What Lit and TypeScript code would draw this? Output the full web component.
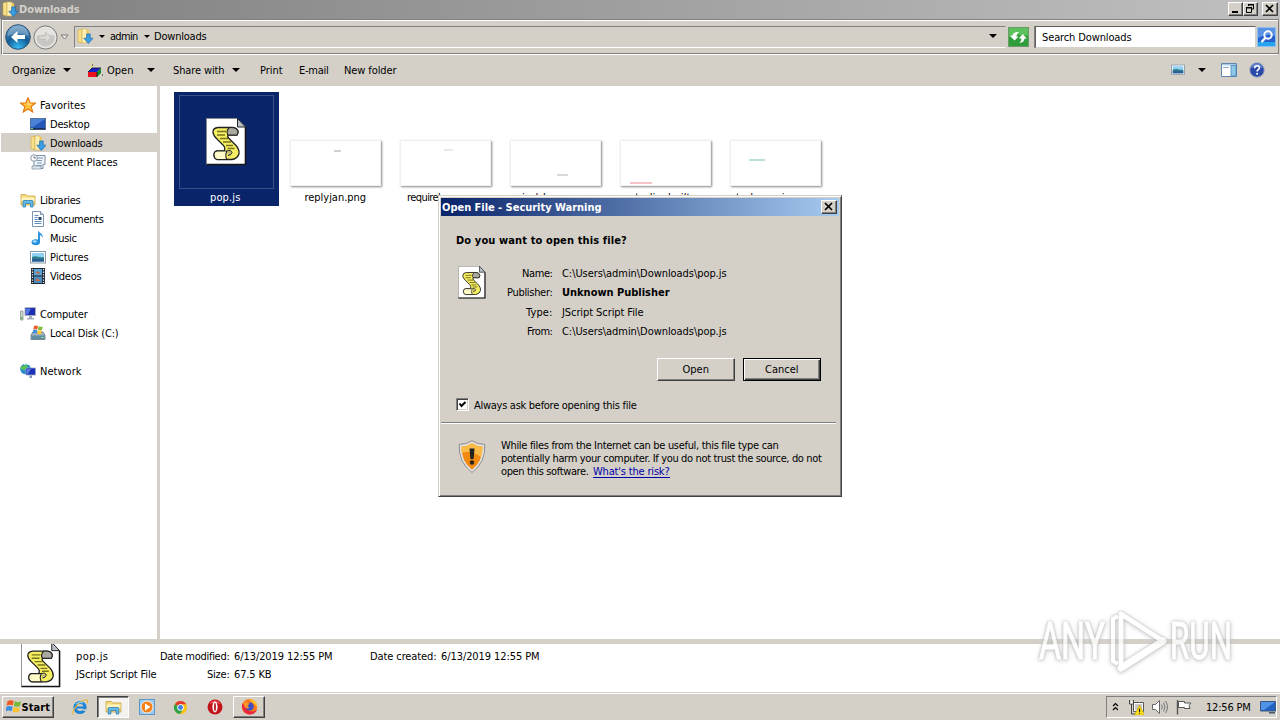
import { LitElement, html, css, svg } from 'lit';
import { customElement, property } from 'lit/decorators.js';
import { classMap } from 'lit/directives/class-map.js';

const icon = (w: number, h: number, body: unknown, box = '0 0 16 16') => html`
  <svg class="icon" width=${w} height=${h} viewBox=${box} preserveAspectRatio="none">${body}</svg>
`;

const downloads = svg`
  <path d="M1 2l4-1v14l-4-1z" fill="#f7e08a" stroke="#c9a545" stroke-width=".6"/>
  <path d="M5 1h5v14H5z" fill="#fbeeb0" stroke="#cfae52" stroke-width=".6"/>
  <path d="M10 2h2v10h-2z" fill="#e9c860"/>
  <path d="M9.600 6h3.600v4.200H16l-4.600 5.400L6.800 10.200h2.800z" fill="#3a9fe4" stroke="#1d68ad" stroke-width=".7"/>`;

const star = svg`<path d="M8 .6l2 5.200 5.500.3-4.300 3.400 1.500 5.500L8 12l-4.700 3 1.500-5.500L.5 6.100 6 5.800z" fill="#ffc23c" stroke="#e2780f" stroke-width="1.100"/>
  <path d="M8 3.500l1.200 3.200 3 .3-4.200 1z" fill="#fff0a8"/>`;

const desktop = svg`<rect x=".5" y="2.500" width="15" height="11" fill="#2458b8" stroke="#56719c"/>
  <path d="M1 3h14L3 11H1z" fill="#4a82d6"/><path d="M1 12h14v1.500H1z" fill="#1c2f55"/><path d="M1 12h2v1H1z" fill="#6fce5c"/>`;

const recent = svg`<path d="M6 1.500h9v9h-2v4H4v-9" fill="#eef3f8" stroke="#7b8ea3"/>
  <path d="M7 4h6M7 6.500h5M7 9h5M6 11.500h6" stroke="#7f98b4"/><path d="M2 12h9v3H2z" fill="#dfe6ee" stroke="#7b8ea3" stroke-width=".7"/>
  <circle cx="4" cy="4" r="3.300" fill="#fff" stroke="#8796a8"/><path d="M4 2v2h2" fill="none" stroke="#4b5a6d" stroke-width=".8"/>`;

const library = svg`<path d="M1 2.500h5l1.500 1.500H15v9H1z" fill="#f7dc7c" stroke="#c5a343" stroke-width=".8"/>
  <path d="M1.500 5.500h13V9h-13z" fill="#fdf3bd"/>
  <path d="M3 15V9.500q0-1 1-1h8q1 0 1 1V15h-2.500v-3.500h-5V15z" fill="#62b9ea" stroke="#2f7fb5" stroke-width=".8"/>`;

const documents = svg`<path d="M2.500.5h8l3 3v12h-11z" fill="#fff" stroke="#7a93ae"/><path d="M10.500.5v3h3" fill="#d5e3f1" stroke="#7a93ae"/>
  <path d="M4.500 4.500h4M4.500 6.500h3M4.500 8.500h3M4.500 10.500h7M4.500 12.500h7" stroke="#5f8fc2"/><path d="M8.500 6h3v3h-3z" fill="#26476e"/>`;

const music = svg`<path d="M8 0c.3 3 5.500 3 5 8.500-.4-2-1.600-3-3-3.200V12H8z" fill="#2f94dd"/>
  <ellipse cx="5.800" cy="12.300" rx="4.200" ry="3" fill="#2590dc"/><ellipse cx="4.800" cy="11.400" rx="2" ry="1.200" fill="#a4dbfa"/>`;

const picture = svg`<rect x=".5" y="2.500" width="15" height="11.500" fill="#fff" stroke="#8b9aa8"/>
  <path d="M2 4h12v8.500H2z" fill="#8fd0f4"/><path d="M2 8c4-2 7 1 12 0v4.500H2z" fill="#2f7f8c"/><path d="M2 10c4-1 8 1 12 0v2.500H2z" fill="#2b5d97"/>`;

const video = svg`<path d="M1 0h14v16H1z" fill="#1d2633"/><path d="M4 1h8v6.500H4z" fill="#5aa5d8"/><path d="M4 8.500h8V15H4z" fill="#4a8ec4"/>
  <path d="M5 5l3-2 3 3zM5 13l2-3 4 3z" fill="#c36a4a"/>
  <path d="M2.500 1v14M13.500 1v14" stroke="#dfe7ef" stroke-width="1.300" stroke-dasharray="1.300 1.300"/>`;

const computer = svg`<path d="M5 1.500h10.500v8H5z" fill="#1d2fb4" stroke="#a9b3c4"/><path d="M6 2.500h5l-3 6H6z" fill="#5375e2"/>
  <path d="M9 10h3v2h2v1.500H7V12h2z" fill="#a5adbd"/><path d="M.5 5h2.500v9H.5z" fill="#cfd9d0" stroke="#808d86" stroke-width=".7"/><path d="M1 11h1.500v2H1z" fill="#58b84a"/>`;

const disk = svg`<path d="M1 10l2-3h10l2 3v4.500H1z" fill="#9fb2bf" stroke="#5f7380" stroke-width=".8"/><path d="M1.500 10.500h13v3.500h-13z" fill="#5f8ea2"/><path d="M11 12h2.500v1H11z" fill="#86f07c"/>
  <path d="M4 1q2-1 4 0L7.300 4.500q-2-1-4 0z" fill="#ee5b27"/><path d="M8.600 1.200q2 1 4 .2L12 5q-2 .6-4-.3z" fill="#7dbb3b"/>
  <path d="M3.200 5q2-1 4 0l-.8 3.400q-2-1-4 0z" fill="#3f8fe0"/><path d="M7.800 5.300q2 1 4 .2l-.8 3.400q-2 .6-4-.3z" fill="#fbc52d"/>`;

const network = svg`<circle cx="5.500" cy="6" r="5.300" fill="#2b8ccb"/><path d="M2 2.500c2 1 3-1 5 0s-1 3-2 4-3 0-4.500-1z" fill="#5bc24a"/><path d="M4 1.500q2-1 4 0" stroke="#d8f3ff" fill="none"/>
  <path d="M6 5h9.500v7H6z" fill="#1c30b8" stroke="#98a9c8" stroke-width=".8"/><path d="M7 6h4l-3 5H7z" fill="#5478e0"/><path d="M9.500 12.500h2.500V15H9.500z" fill="#7e91b5"/>`;

const screen = svg`<path d="M.5 2.500h15v9.500H.5z" fill="#2462c2" stroke="#3c567f"/><path d="M1 3h14L4 11H1z" fill="#4f92e6"/><path d="M9 13h6v1.500H9z" fill="#4d5866"/>`;

const openApp = svg`<path d="M1 10l4-4h9l-4 4z" fill="#1420c8"/><path d="M1 10h9v5H1z" fill="#e8121c"/><path d="M10 10l4-4v5l-4 4z" fill="#158a2a"/>
  <path d="M1 10l4-4h9M10 10v5" stroke="#111" fill="none" stroke-width=".8"/><path d="M3 0h1M5 2h1M2 3h1M4 4h2" stroke="#f2dc3c" stroke-width="1.200"/><path d="M5 3h1M15 13h1" stroke="#111"/>`;

const preview = svg`<path d="M.5 1.500h15v13H.5z" fill="#fff" stroke="#5f86ad"/><path d="M1 2h14v1.500H1z" fill="#a9cbe6"/><path d="M10 3.500h5V14h-5z" fill="#8ec9ea" stroke="#4d86b5" stroke-width=".8"/><path d="M2 5.500h6" stroke="#8ca7bf"/>`;

const winFlag = svg`<path d="M1.500 2.500q3-2.200 6.200-.5L6.800 7q-3-1.600-6.200.2z" fill="#ee5a24"/><path d="M8.700 2.500q3 1.600 6.500-.2L14 7.400q-3 1.600-6.200 0z" fill="#79b93a"/>
  <path d="M.5 8.300q3-1.700 6.100-.1L5.700 13q-3-1.600-6.100.3z" fill="#3b8ee2"/><path d="M7.600 8.600q3 1.700 6.200.1l-1.100 4.900q-3 1.600-6-.1z" fill="#fcc32c"/>`;

const ie = svg`<circle cx="8" cy="8.500" r="5" fill="none" stroke="#1f84d6" stroke-width="3.200"/><path d="M4 8.500h9.500" stroke="#1f84d6" stroke-width="2.200"/><path d="M10 10.200h6v1.600h-5z" fill="#d4d0c8"/>
  <path d="M1.500 15.500C-2 13 9 0 14.500.8c1.500.3 1.200 2 .5 3.400" fill="none" stroke="#e9b835" stroke-width="1.200"/><path d="M4 5q3-3 7-1" stroke="#93d6fb" fill="none"/>`;

const wmp = svg`<rect x=".5" y=".5" width="15" height="15" fill="#9dcbee" stroke="#5d97c8"/><circle cx="8" cy="8" r="6" fill="#f5821c" stroke="#fff" stroke-width=".8"/><path d="M6 4.500l5.500 3.500L6 11.500z" fill="#fff"/>`;

const chrome = svg`<circle cx="8" cy="8" r="7" fill="#fbc116"/><path d="M8 8L1.900 4.500A7 7 0 0 1 14.100 4.500H8z" fill="#e33b2e"/><path d="M8 8L1.900 4.500A7 7 0 0 0 7.500 15L11 9.700z" fill="#2da14c"/>
  <circle cx="8" cy="8" r="3.500" fill="#fff"/><circle cx="8" cy="8" r="2.600" fill="#3f7fe8"/>`;

const opera = svg`<circle cx="8" cy="8" r="7.500" fill="#c3141c"/><path d="M2 5q6-7 12 0-6-2-12 0z" fill="#ea5a5c"/><ellipse cx="8" cy="8" rx="2.600" ry="5.400" fill="#fff"/><ellipse cx="8" cy="8" rx=".9" ry="4.200" fill="#b30f17"/>`;

const firefox = svg`<circle cx="8" cy="8.300" r="7.300" fill="#ff7a1a"/><path d="M8 1c5 0 8 4 7.200 8.500C14.500 6 12 6 11 4.500 10.200 3 8.500 3 8 1z" fill="#ffc42e"/>
  <path d="M1 5c-.5 6 2 10 7 10.500 3 .2 6-1.500 7-5-3 3-7 3-9 0z" fill="#e8263f"/><circle cx="8.200" cy="8" r="3.700" fill="#3a4fc4"/><path d="M3 4c2-.6 4 0 5 1.500L6 7.500l2 2c-3 1.500-5-1-5-3z" fill="#ff9425"/>`;

const search = svg`<rect x=".5" y=".5" width="18" height="19" fill="#2560cc" stroke="#8dbdf0"/><path d="M1 1h17v8q-8-3-17 2z" fill="#5b93e4"/><path d="M1 15h17v4H1z" fill="#28a4ec"/>
  <circle cx="11" cy="8" r="3.700" fill="none" stroke="#fff" stroke-width="2"/><path d="M8.200 11L4.500 15" stroke="#fff" stroke-width="2.400"/>`;

const refresh = svg`<rect x=".5" y=".5" width="19" height="19" fill="#2f9d3a" stroke="#6c9a6a"/><path d="M1 1h18v8q-9-3-18 1z" fill="#5cc25e"/>
  <path d="M2 9l4.200 4.500L10 9.500H8q.2-3 2.400-4.500Q5 4.500 4.300 8.600z" fill="#fff"/>
  <path d="M10.300 11.500L14 7l4 4.500h-2.200q-.4 4-5 4.500 2-1.500 2-4.500z" fill="#fff"/>`;

const help = svg`<circle cx="8" cy="8" r="7.300" fill="#2b4aa8" stroke="#a3aec6"/><path d="M2 6a6.300 6.300 0 0 1 12 0q-6-2-12 0z" fill="#6385cf"/>
  <path d="M5.700 6.200q0-2.400 2.400-2.400t2.300 2q0 1.200-1.300 1.900-1 .5-1 1.800" fill="none" stroke="#fff" stroke-width="1.600"/><circle cx="8.100" cy="11.800" r="1" fill="#fff"/>`;

const back = svg`<defs><radialGradient id="b" cx=".5" cy=".95" r=".95"><stop offset="0" stop-color="#35c0f5"/><stop offset=".5" stop-color="#155c96"/><stop offset="1" stop-color="#6b9cc2"/></radialGradient></defs>
  <circle cx="13" cy="13" r="12.300" fill="url(#b)" stroke="#2c5478"/><path d="M2.500 12a10.500 10.500 0 0 1 21 0q-10-4-21 0z" fill="#fff" opacity=".25"/>
  <path d="M12.500 7L6 13l6.500 6v-4H20v-4h-7.500z" fill="#fff"/>`;

const forward = svg`<circle cx="12.500" cy="12.500" r="11.600" fill="#c9c7c4" stroke="#7f7f7f"/><circle cx="12.500" cy="12.500" r="10" fill="none" stroke="#e8e6e3" stroke-width="1.500"/>
  <path d="M3 11a9.600 9.600 0 0 1 19 0q-9-3-19 0z" fill="#e4e2df"/><path d="M12.500 7l5.500 5.500-5.500 5.500v-4H6v-3h6.500z" fill="#dcdad7" stroke="#bfbcb8" stroke-width=".8"/>`;

const netTray = svg`<path d="M5.500 3.500h10v9h-10z" fill="#fff" stroke="#555"/><path d="M7 5h7v6H7z" fill="#c9c9c9"/><path d="M1.500 1v4h4V1M3.500 5v10H9" stroke="#444" fill="none"/><path d="M2.500 2.500h2v2h-2z" fill="#fff"/>
  <path d="M11.500 6l5 10H6.500z" fill="#ffe11a" stroke="#b89500" stroke-width=".6"/><path d="M11.500 9.500v3.500M11.500 13.800v1" stroke="#222" stroke-width="1.200"/>`;

const speaker = svg`<path d="M.5 5.500h3l4-4v13l-4-4h-3z" fill="#fff" stroke="#666"/><path d="M9.500 5.500q1.800 2.500 0 5M11.500 3.500q3 4.500 0 9M13.500 2q4 6 0 12" fill="none" stroke="#777"/>`;

const flag = svg`<path d="M1.500 1v14.500" stroke="#555" stroke-width="1.400"/><path d="M2.500 2.500h6v1.500h6.500l-2 2.500 1 3H8.500V8.500h-6z" fill="#fff" stroke="#555"/>`;

const scroll = svg`
  <path d="M.5.500h31L39.500 9v37.500H.5z" fill="#fff" stroke="#8b8b8b"/>
  <path d="M39.500 9v37.500H.5" fill="none" stroke="#151515" stroke-width="1.600"/>
  <path d="M31.500.5V9h8z" fill="#b9c0cc" stroke="#222"/>
  <path d="M12 9.500Q7 10 7 14q0 3 3.500 6.500L17 27q3 3 1 6h-7q-3 .5-3 4t3 4.500h15q6-1 7-6 .5-4-3-8l-7-7q-2-2-1-3.500h9q2.500-4-1-6.500-1.500-1-4-1z" fill="#f6ee62" stroke="#222" stroke-width="1.300"/>
  <path d="M23.500 9.500q-4 3.500-1.500 7.500h9q2.500-4-1-6.500-2-1.200-6.500-1z" fill="#a9a9a0" stroke="#222" stroke-width="1.100"/>
  <path d="M11 33q-3 .5-3 4t3 4.500h10q-2.500-4 0-8.500z" fill="#fffbc8" stroke="#222" stroke-width="1.100"/>
  <path d="M21 33q4-1.500 5 1.500-1 3-4 3" fill="#c9c178" stroke="#222"/>
  <path d="M11 13.500h9M11 17h8M14 20.500h8M17 24h8M20 27.500h7M21.500 30.500h7" stroke="#77721d" stroke-width="1.400"/>`;

const shield = svg`<path d="M14 .7q6 4 12.700 3.600Q28 22 14 32.500 0 22 1.300 4.300 8 4.700 14 .7z" fill="#e4e4e4" stroke="#777" stroke-width=".8"/>
  <path d="M14 3.200q5 3 10.500 3.200Q25 21 14 29.800 3 21 3.500 6.400 9 6.200 14 3.200z" fill="#f28a12"/>
  <path d="M14 3.200q5 3 10.500 3.200.2 6-1.500 10.500Q13 10 3.600 13q-.3-3-.1-6.600Q9 6.200 14 3.200z" fill="#fbbb48"/>
  <path d="M11.500 8.500h5L15.600 19h-3.200z" fill="#222"/><circle cx="14" cy="22.500" r="2.200" fill="#222"/>`;

// Text whose tracking is adjusted so that it fills a given width.
@customElement('fit-text')
export class FitText extends LitElement {
  static styles = css`
    :host { display: inline-block; white-space: pre; line-height: 16px; height: 14px; flex: none; }
    span { display: inline-block; }
  `;

  @property({ type: Number }) w = 0;
  @property() text = '';

  async firstUpdated() {
    await document.fonts.ready;
    const span = this.renderRoot.querySelector('span')!;
    const natural = span.getBoundingClientRect().width;
    span.style.letterSpacing = `${(this.w - 0.5 - natural) / this.text.length}px`;
  }

  render() {
    return html`<span>${this.text}</span>`;
  }
}

const t = (text: string, w: number) => html`<fit-text .text=${text} .w=${w} style="width:${w}px"></fit-text>`;

const tree = [
  [
    { name: 'Favorites', w: 46, icon: star },
    { name: 'Desktop', w: 40, icon: desktop },
    { name: 'Downloads', w: 53, icon: downloads, active: true },
    { name: 'Recent Places', w: 68, icon: recent },
  ],
  [
    { name: 'Libraries', w: 41, icon: library },
    { name: 'Documents', w: 54, icon: documents },
    { name: 'Music', w: 27, icon: music },
    { name: 'Pictures', w: 39, icon: picture },
    { name: 'Videos', w: 32, icon: video },
  ],
  [
    { name: 'Computer', w: 48, icon: computer },
    { name: 'Local Disk (C:)', w: 69, icon: disk },
  ],
  [{ name: 'Network', w: 42, icon: network }],
];

const images = [
  { name: 'replyjan.png', w: 62, mark: [43, 9, 7, '#c4c4c4'] },
  { name: 'requirehome.png', w: 77, mark: [43, 8, 9, '#e4e4e4'] },
  { name: 'singlebanner.png', w: 76, mark: [46, 33, 11, '#d0d0d0'] },
  { name: 'australianbuilt.png', w: 96, mark: [9, 41, 22, '#f4b4bc'] },
  { name: 'studyservice.png', w: 90, mark: [18, 18, 16, '#acd8cc'] },
];

@customElement('app-root')
export class AppRoot extends LitElement {
  static styles = css`
    :host {
      display: flex;
      flex-direction: column;
      position: relative;
      width: 1280px;
      height: 720px;
      overflow: hidden;
      background: #d4d0c8;
      color: #000;
      font: 11px Tahoma, 'DejaVu Sans Condensed', 'DejaVu Sans', sans-serif;
      cursor: default;
    }
    * { box-sizing: border-box; }
    .icon { display: block; flex: none; }
    .bold { font-weight: bold; }
    .grow { flex: 1; }

    .title {
      display: flex;
      align-items: center;
      height: 19px;
      padding: 0 2px 1px 2px;
      background: linear-gradient(90deg, #808080, #c0c0c0);
      color: #d4d0c8;
      flex: none;
    }
    .title fit-text { margin-left: 1px; font-weight: bold; }
    .winbtn {
      width: 15px;
      height: 14px;
      background: #d4d0c8;
      border: 1px solid;
      border-color: #fff #404040 #404040 #fff;
      box-shadow: inset -1px -1px #808080;
    }
    .winbtn.close { margin-left: 4px; width: 16px; }

    .nav {
      display: flex;
      align-items: center;
      height: 36px;
      margin: 0 1px;
      border: 1px solid #808080;
      border-bottom: 1px solid #fff;
      box-shadow: inset 1px 1px #fff, inset 0 -1px #808080;
      padding-left: 3px;
      flex: none;
    }
    .tri { width: 0; border: 4px solid transparent; border-top-color: #000; border-bottom: 0; flex: none; }
    .tri.small { border-width: 3px 3px 0; }
    .address {
      display: flex;
      align-items: center;
      width: 932px;
      height: 22px;
      margin-left: 5px;
      padding: 0 0 2px 2px;
      border: 1px solid;
      border-color: #808080 #d4d0c8 #fff #808080;
      background: #d4d0c8;
      flex: none;
    }
    .search {
      width: 221px;
      height: 22px;
      margin: 0 1px 0 6px;
      padding: 3px 0 0 6px;
      background: #fff;
      border: 1px solid;
      border-color: #606060 #d4d0c8 #d4d0c8 #606060;
      box-shadow: -1px 0 #808080;
      flex: none;
    }

    .toolbar { display: flex; align-items: center; height: 31px; padding: 0 0 2px 12px; flex: none; }

    .main { display: flex; height: 553px; background: #fff; flex: none; }
    .tree { width: 157px; padding-top: 9px; }
    .group { margin-bottom: 19px; }
    .node { display: flex; align-items: center; height: 19px; padding-left: 29px; gap: 4px; margin-left: 1px; }
    .node.top { padding-left: 19px; }
    .node.active { background: #d4d0c8; }
    .split { width: 3px; background: #d4d0c8; }

    .files { display: flex; align-items: flex-start; gap: 5px; padding: 6px 0 0 14px; }
    .file { display: flex; flex-direction: column; align-items: center; width: 105px; height: 114px; }
    .file fit-text { margin-right: 2px; }
    .file.selected { background: #0a246a; color: #fff; }
    .frame {
      display: flex;
      align-items: center;
      justify-content: center;
      width: 95px;
      height: 94px;
      margin: 3px 0 1px;
    }
    .selected .frame { border: 1px solid #3a5088; }
    .frame.thumb { align-items: flex-end; padding: 0 3px 3px 0; }
    .paper { width: 91px; height: 46px; background: #fff; border: 1px solid #f0f0f0; box-shadow: 1px 1px 2px #888; }
    .mark { height: 2px; opacity: 0.8; }

    .details { height: 53px; background: #fff; border-top: 5px solid #d4d0c8; display: flex; flex: none; }
    .doc { margin-left: 21px; height: 44px; overflow: hidden; display: flex; align-items: flex-end; }
    .col { display: grid; grid-auto-rows: 18px; padding-top: 5px; column-gap: 4px; justify-items: start; align-content: start; }
    .pair { grid-template-columns: auto auto; }
    .pair > :nth-child(odd) { justify-self: end; }

    .taskbar {
      display: flex;
      align-items: center;
      height: 28px;
      border-top: 1px solid #d4d0c8;
      box-shadow: inset 0 1px #fff;
      padding: 3px 3px 2px 2px;
      flex: none;
    }
    .btn {
      display: flex;
      align-items: center;
      justify-content: center;
      background: #d4d0c8;
      border: 1px solid;
      border-color: #fff #404040 #404040 #fff;
      box-shadow: inset -1px -1px #808080;
      padding-bottom: 1px;
    }
    .start { width: 52px; height: 22px; font-weight: bold; }
    .task { width: 32px; height: 22px; }
    .task.pressed { background: #f4f2ee; border-color: #404040 #fff #fff #404040; box-shadow: inset 1px 1px #808080; }
    .quick { margin: 0 9px 0 18px; display: flex; }
    .tray {
      display: flex;
      align-items: center;
      width: 171px;
      height: 22px;
      border: 1px solid;
      border-color: #808080 #fff #fff #808080;
      padding: 0 0 1px 5px;
    }

    .dialog {
      position: absolute;
      left: 438px;
      top: 195px;
      width: 404px;
      height: 302px;
      padding: 1px;
      background: #d4d0c8;
      border: 1px solid;
      border-color: #d4d0c8 #404040 #404040 #d4d0c8;
      box-shadow: inset 1px 1px #fff, inset -1px -1px #808080;
    }
    .caption {
      display: flex;
      align-items: center;
      justify-content: space-between;
      height: 18px;
      margin: 1px 1px 0;
      padding: 0 2px 0 1px;
      background: linear-gradient(90deg, #0a246a, #a6caf0);
      color: #fff;
      font-weight: bold;
    }
    .caption .winbtn { width: 16px; height: 14px; }
    .body { padding: 17px 19px 0 16px; }
    .info { display: flex; margin-top: 17px; height: 94px; }
    .info > svg { margin: 2px 0 0 2px; }
    .fields {
      display: grid;
      grid-template-columns: 67px auto;
      grid-template-rows: 19px 20px 19px 19px;
      column-gap: 9px;
      margin-top: 2px;
      align-content: start;
    }
    .fields > :nth-child(odd) { justify-self: end; }
    .actions { display: flex; justify-content: flex-end; gap: 8px; }
    .actions .btn { width: 78px; height: 23px; padding-bottom: 2px; }
    .actions .default { border: 1px solid #000; box-shadow: inset 1px 1px #fff, inset -1px -1px #404040, inset -2px -2px #808080; }
    .check { display: flex; align-items: flex-start; margin-top: 17px; gap: 5px; height: 14px; }
    .box {
      width: 13px;
      height: 13px;
      background: #fff;
      border: 1px solid;
      border-color: #808080 #fff #fff #808080;
      box-shadow: inset 1px 1px #404040, inset -1px -1px #d4d0c8;
    }
    .rule { height: 2px; margin: 10px 4px 0 1px; border-top: 1px solid #808080; border-bottom: 1px solid #fff; }
    .warn { display: flex; padding: 14px 0 0 18px; gap: 15px; }
    .warn svg { margin-top: 2px; }
    .lines { display: grid; grid-auto-rows: 13px; }
    .link { color: #0000a8; border-bottom: 1px solid #0000a8; height: 14px; margin-left: 4px; display: inline-flex; }
    .last { display: flex; }

    .watermark { position: absolute; left: 1030px; top: 602px; overflow: visible; }
    .watermark text { font-family: Roboto, sans-serif; font-size: 52px; }
    .glow { filter: drop-shadow(0 0 1.5px #aaa) drop-shadow(0 1px 2px #ccc); }
  `;

  private renderNode(node: any, i: number) {
    return html`
      <div class=${classMap({ node: true, top: i === 0, active: !!node.active })}>
        ${icon(16, 16, node.icon)}${t(node.name, node.w)}
      </div>
    `;
  }

  private renderImage(item: any) {
    const [x, y, w, color] = item.mark;
    return html`
      <div class="file">
        <div class="frame thumb">
          <div class="paper">
            <div class="mark" style="width:${w}px;margin:${y}px 0 0 ${x}px;background:${color}"></div>
          </div>
        </div>
        ${t(item.name, item.w)}
      </div>
    `;
  }

  private gap(w: number) {
    return html`<div style="width:${w}px;flex:none"></div>`;
  }

  private cross() {
    return icon(14, 12, svg`<path d="M3 2l7 7M10 2l-7 7" stroke="#000" stroke-width="1.700"/>`, '0 0 14 12');
  }

  private renderTitle() {
    return html`
      <div class="title">
        ${icon(16, 16, downloads)}${t('Downloads', 61)}
        <div class="grow"></div>
        <div class="winbtn">${icon(13, 12, svg`<path d="M3 8h6v2H3z"/>`, '0 0 13 12')}</div>
        <div class="winbtn">
          ${icon(13, 12, svg`<path d="M4.500 3V1.500h5V6H8" fill="none" stroke="#000"/><path d="M4 1h6v1.500H4zM2 4h6v1.500H2z"/><path d="M2.500 4.500h5v5h-5z" fill="none" stroke="#000"/>`, '0 0 13 12')}
        </div>
        <div class="winbtn close">${this.cross()}</div>
      </div>
    `;
  }

  private renderNav() {
    return html`
      <div class="nav">
        ${icon(26, 26, back, '0 0 26 26')}${this.gap(2)}${icon(25, 25, forward, '0 0 25 25')}${this.gap(2)}
        ${icon(9, 6, svg`<path d="M1 1h7L4.500 5z" fill="#f4f2ee" stroke="#777"/>`, '0 0 9 6')}
        <div class="address">
          ${icon(16, 16, downloads)}${this.gap(6)}
          <div class="tri small"></div>${this.gap(5)}${t('admin', 28)}${this.gap(6)}
          <div class="tri small"></div>${this.gap(4)}${t('Downloads', 53)}
          <div class="grow"></div><div class="tri"></div>${this.gap(8)}
        </div>
        ${this.gap(2)}${icon(21, 20, refresh, '0 0 20 20')}
        <div class="search">${t('Search Downloads', 90)}</div>
        ${icon(19, 20, search, '0 0 19 20')}
      </div>
    `;
  }

  private renderToolbar() {
    return html`
      <div class="toolbar">
        ${t('Organize', 44)}${this.gap(7)}<div class="tri"></div>${this.gap(16)}
        ${icon(16, 16, openApp)}${this.gap(4)}${t('Open', 27)}${this.gap(13)}<div class="tri"></div>${this.gap(18)}
        ${t('Share with', 52)}${this.gap(7)}<div class="tri"></div>${this.gap(20)}
        ${t('Print', 23)}${this.gap(16)}${t('E-mail', 30)}${this.gap(15)}${t('New folder', 53)}
        <div class="grow"></div>
        ${icon(14, 13, picture)}${this.gap(13)}<div class="tri"></div>${this.gap(15)}
        ${icon(16, 16, preview)}${this.gap(12)}${icon(16, 16, help)}${this.gap(15)}
      </div>
    `;
  }

  private renderDialog() {
    return html`
      <div class="dialog">
        <div class="caption">${t('Open File - Security Warning', 160)}<div class="winbtn">${this.cross()}</div></div>
        <div class="body">
          <div class="bold">${t('Do you want to open this file?', 171)}</div>
          <div class="info">
            ${icon(28, 33, scroll, '0 0 41 48')}
            <div class="fields">
              ${t('Name:', 31)}${t('C:\\Users\\admin\\Downloads\\pop.js', 165)}
              ${t('Publisher:', 46)}<span class="bold">${t('Unknown Publisher', 108)}</span>
              ${t('Type:', 27)}${t('JScript Script File', 82)}
              ${t('From:', 26)}${t('C:\\Users\\admin\\Downloads\\pop.js', 165)}
            </div>
          </div>
          <div class="actions">
            <div class="btn">${t('Open', 27)}</div>
            <div class="btn default">${t('Cancel', 34)}</div>
          </div>
          <div class="check">
            <div class="box">${icon(11, 11, svg`<path d="M2.500 4.500L4.500 7 8.500 3" fill="none" stroke="#000" stroke-width="2"/>`, '0 0 11 11')}</div>
            ${t('Always ask before opening this file', 163)}
          </div>
        </div>
        <div class="rule"></div>
        <div class="warn">
          ${icon(28, 33, shield, '0 0 28 33')}
          <div class="lines">
            ${t('While files from the Internet can be useful, this file type can', 278)}
            ${t('potentially harm your computer. If you do not trust the source, do not', 321)}
            <div class="last">${t('open this software.', 88)}<span class="link">${t("What's the risk?", 77)}</span></div>
          </div>
        </div>
      </div>
    `;
  }

  private renderTaskbar() {
    return html`
      <div class="taskbar">
        <div class="btn start">${icon(16, 15, winFlag)}${t('Start', 29)}</div>
        <div class="quick">${icon(16, 16, ie)}</div>
        <div class="btn task pressed">${icon(17, 16, library)}</div>
        ${this.gap(10)}${icon(16, 16, wmp)}${this.gap(18)}${icon(15, 15, chrome)}${this.gap(19)}${icon(16, 16, opera)}${this.gap(10)}
        <div class="btn task">${icon(17, 17, firefox)}</div>
        <div class="grow"></div>
        <div class="tray">
          ${icon(7, 9, svg`<path d="M1 4l2.500-2.500L6 4M1 8l2.500-2.500L6 8" fill="none" stroke="#000" stroke-width="1.200"/>`, '0 0 7 9')}
          ${this.gap(9)}${icon(16, 16, netTray)}${this.gap(8)}${icon(16, 16, speaker)}${this.gap(8)}${icon(16, 16, flag)}
          ${this.gap(14)}${t('12:56 PM', 45)}${this.gap(9)}${icon(16, 16, screen)}
        </div>
      </div>
    `;
  }

  private renderWatermark() {
    return html`
      <svg class="watermark" width="212" height="78" viewBox="0 0 212 78">
        <g class="glow" fill="#fff" stroke="#fff" opacity=".8">
          <text x="9" y="57" textLength="66" lengthAdjust="spacingAndGlyphs">ANY</text>
          <text x="140" y="57" textLength="62" lengthAdjust="spacingAndGlyphs">RUN</text>
          <path d="M88 62l-5-3V17l5-3" fill="none" stroke-width="4"/>
          <path d="M91 12l42 27-42 27z" fill="none" stroke-width="5" stroke-linejoin="round"/>
          <path d="M91 66L133 39" fill="none" stroke-width="7" stroke-linecap="round"/>
        </g>
      </svg>
    `;
  }

  render() {
    return html`
      ${this.renderTitle()}${this.renderNav()}${this.renderToolbar()}
      <div class="main">
        <div class="tree">
          ${tree.map((group) => html`<div class="group">${group.map((n, i) => this.renderNode(n, i))}</div>`)}
        </div>
        <div class="split"></div>
        <div class="files">
          <div class="file selected">
            <div class="frame">${icon(41, 48, scroll, '0 0 41 48')}</div>
            ${t('pop.js', 31)}
          </div>
          ${images.map((item) => this.renderImage(item))}
        </div>
      </div>
      <div class="details">
        <div class="doc">${icon(40, 46, scroll, '0 0 41 48')}</div>
        ${this.gap(15)}
        <div class="col">${t('pop.js', 33)}${t('JScript Script File', 81)}</div>
        ${this.gap(3)}
        <div class="col pair">
          ${t('Date modified:', 70)}${t('6/13/2019 12:55 PM', 99)}
          ${t('Size:', 23)}${t('67.5 KB', 38)}
        </div>
        ${this.gap(37)}
        <div class="col pair">${t('Date created:', 67)}${t('6/13/2019 12:55 PM', 99)}</div>
      </div>
      ${this.renderTaskbar()}${this.renderDialog()}${this.renderWatermark()}
    `;
  }
}
